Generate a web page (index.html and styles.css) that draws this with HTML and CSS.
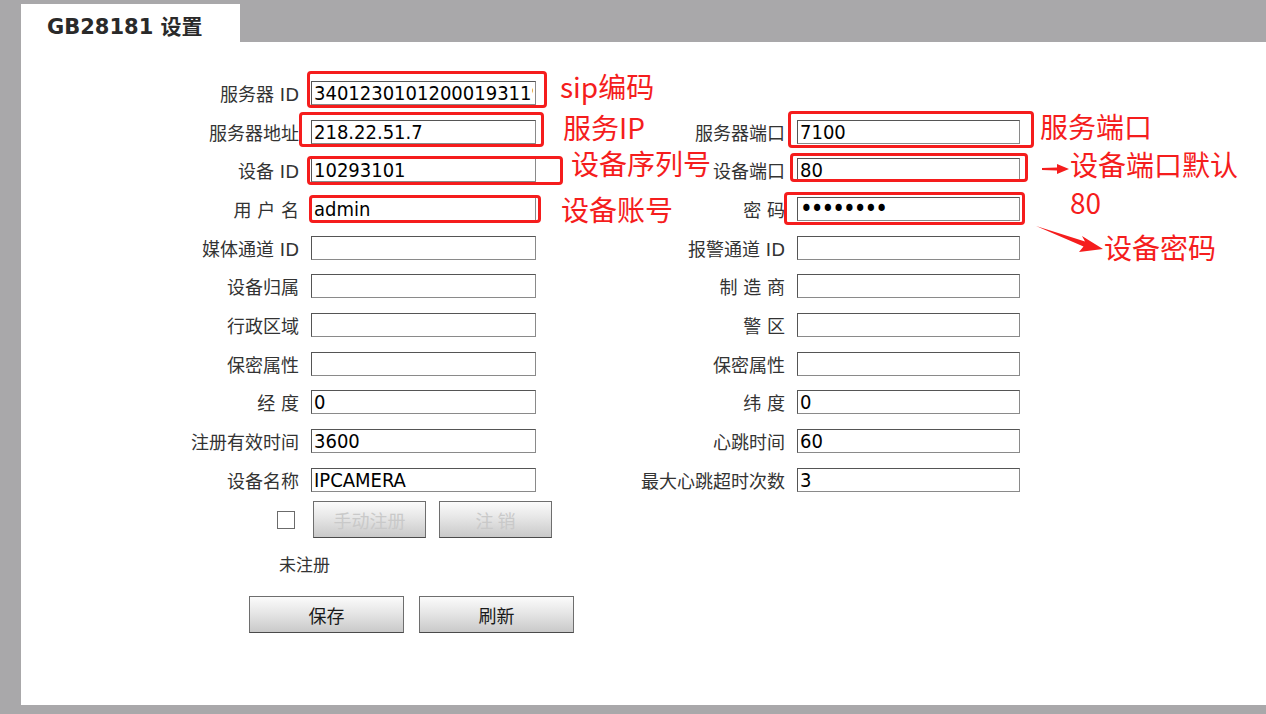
FILE: index.html
```html
<!DOCTYPE html>
<html lang="zh-CN">
<head>
    <meta charset="UTF-8">
    <title>GB28181 设置</title>
    <link rel="stylesheet" href="styles.css">
</head>
<body>
    <div class="tabs">
        <div class="tab">GB28181 设置</div>
    </div>

    <div class="panel">
        <!-- GB28181 form -->
        <div class="form-grid">
            <label class="field-label">服务器 ID</label>
            <input class="field-input" type="text" value="34012301012000193119">
            <span></span><span></span>

            <label class="field-label">服务器地址</label>
            <input class="field-input" type="text" value="218.22.51.7">
            <label class="field-label">服务器端口</label>
            <input class="field-input" type="text" value="7100">

            <label class="field-label">设备 ID</label>
            <input class="field-input" type="text" value="10293101">
            <label class="field-label">设备端口</label>
            <input class="field-input" type="text" value="80">

            <label class="field-label">用 户 名</label>
            <input class="field-input" type="text" value="admin">
            <label class="field-label">密 码</label>
            <input class="field-input" type="password" value="12345678">

            <label class="field-label">媒体通道 ID</label>
            <input class="field-input" type="text" value="">
            <label class="field-label">报警通道 ID</label>
            <input class="field-input" type="text" value="">

            <label class="field-label">设备归属</label>
            <input class="field-input" type="text" value="">
            <label class="field-label">制 造 商</label>
            <input class="field-input" type="text" value="">

            <label class="field-label">行政区域</label>
            <input class="field-input" type="text" value="">
            <label class="field-label">警 区</label>
            <input class="field-input" type="text" value="">

            <label class="field-label">保密属性</label>
            <input class="field-input" type="text" value="">
            <label class="field-label">保密属性</label>
            <input class="field-input" type="text" value="">

            <label class="field-label">经 度</label>
            <input class="field-input" type="text" value="0">
            <label class="field-label">纬 度</label>
            <input class="field-input" type="text" value="0">

            <label class="field-label">注册有效时间</label>
            <input class="field-input" type="text" value="3600">
            <label class="field-label">心跳时间</label>
            <input class="field-input" type="text" value="60">

            <label class="field-label">设备名称</label>
            <input class="field-input" type="text" value="IPCAMERA">
            <label class="field-label">最大心跳超时次数</label>
            <input class="field-input" type="text" value="3">
        </div>

        <!-- register controls -->
        <div class="register-row">
            <span class="check-box"></span>
            <button class="btn btn-small" disabled>手动注册</button>
            <button class="btn btn-small" disabled>注 销</button>
        </div>
        <div class="register-status">未注册</div>

        <div class="save-row">
            <button class="btn btn-wide">保存</button>
            <button class="btn btn-wide">刷新</button>
        </div>
    </div>

    <!-- red annotations drawn over the screenshot -->
    <div class="notes">
        <div class="note-box box-sip"></div>
        <div class="note-box box-ip"></div>
        <div class="note-box box-devid"></div>
        <div class="note-box box-user"></div>
        <div class="note-box box-port"></div>
        <div class="note-box box-devport"></div>
        <div class="note-box box-pwd"></div>

        <span class="note-text text-sip">sip编码</span>
        <span class="note-text text-ip">服务IP</span>
        <span class="note-text text-devid">设备序列号</span>
        <span class="note-text text-user">设备账号</span>
        <span class="note-text text-port">服务端口</span>
        <span class="note-text text-devport">设备端口默认<br>80</span>
        <span class="note-text text-pwd">设备密码</span>

        <svg class="arrow arrow-port" width="28" height="12" viewBox="0 0 28 12">
            <path d="M0 5 L15 4.5 L15 1 L27 6 L15 11 L15 7.5 L0 7 Z" fill="#f51d1d"/>
        </svg>
        <svg class="arrow arrow-pwd" width="70" height="30" viewBox="0 0 70 30">
            <path d="M1 1 L50 16.5 L47 11 L68 24 L44 27 L48.5 21.5 Z" fill="#f51d1d"/>
        </svg>
    </div>
</body>
</html>
```

FILE: styles.css
```css
body {
    margin: 0;
    padding: 0;
    background-color: #a9a8aa;
    font-family: "DejaVu Sans", "Noto Sans CJK SC", sans-serif;
    height: 714px;
    overflow: hidden;
    position: relative;
}

.tabs {
    padding: 4px 0 0 21px;
    height: 38px;
}

.tab {
    width: 219px;
    height: 38px;
    background-color: #ffffff;
    box-sizing: border-box;
    padding: 6px 0 0 26px;
    font-size: 21px;
    font-weight: bold;
    color: #2a2a2a;
}

.panel {
    margin-left: 21px;
    height: 663px;
    box-sizing: border-box;
    padding-top: 31.6px;
    background-color: #ffffff;
}

/* form */
.form-grid {
    display: grid;
    grid-template-columns: 290px 225px 261px 223px;
    grid-auto-rows: 38.7px;
    align-items: center;
}

.field-label {
    text-align: right;
    padding-right: 12px;
    font-size: 18px;
    color: #333333;
    white-space: nowrap;
    font-family: "DejaVu Sans", "Noto Sans CJK SC", sans-serif;
}

.field-input {
    height: 24px;
    box-sizing: border-box;
    margin: 0;
    padding: 0 2px;
    border: 1px solid #8a8a8a;
    border-top-color: #555555;
    border-left-color: #555555;
    background-color: #ffffff;
    font-family: "DejaVu Sans Condensed", "DejaVu Sans", sans-serif;
    font-stretch: condensed;
    font-size: 20px;
    color: #000000;
    outline: none;
}

input[type="password"] {
    font-size: 24px;
    letter-spacing: -2px;
}

/* register controls */
.register-row {
    display: flex;
    align-items: center;
    gap: 13px;
    height: 39px;
    margin: 1px 0 0 256px;
}

.check-box {
    width: 18px;
    height: 18px;
    box-sizing: border-box;
    border: 1px solid #6b6b6b;
    background-color: #ffffff;
    margin-right: 5px;
}

.btn {
    height: 37px;
    box-sizing: border-box;
    border: 1px solid #6e6e6e;
    border-bottom-color: #4a4a4a;
    background: linear-gradient(#fbfbfb, #e6e6e6 45%, #c9c9c9);
    font-family: "Noto Sans CJK SC", sans-serif;
    font-size: 18px;
    color: #1a1a1a;
    padding: 0;
    cursor: pointer;
}

.btn-small {
    width: 113px;
}

.btn-small:disabled {
    color: #c9c9c9;
    cursor: default;
}

.btn-wide {
    width: 155px;
}

.register-status {
    margin: 15px 0 0 258px;
    height: 20px;
    line-height: 20px;
    font-family: "Noto Sans CJK SC", sans-serif;
    font-size: 17px;
    color: #333333;
}

.save-row {
    display: flex;
    gap: 15px;
    margin: 22px 0 0 228px;
}

/* annotations */
.notes {
    position: absolute;
    left: 0;
    top: 0;
    width: 1266px;
    height: 714px;
    pointer-events: none;
}

.note-box {
    position: absolute;
    border: 3px solid #f51d1d;
    border-radius: 4px;
    box-sizing: border-box;
}

.box-sip { left: 307px; top: 71px; width: 240px; height: 37px; }
.box-ip { left: 299px; top: 112px; width: 245px; height: 35px; }
.box-devid { left: 307px; top: 156px; width: 256px; height: 29px; }
.box-user { left: 309px; top: 195px; width: 232px; height: 28px; }
.box-port { left: 788px; top: 111px; width: 246px; height: 37px; }
.box-devport { left: 790px; top: 153px; width: 238px; height: 29px; }
.box-pwd { left: 784px; top: 192px; width: 241px; height: 33px; }

.note-text {
    position: absolute;
    font-family: "Noto Sans CJK SC", sans-serif;
    font-size: 28px;
    line-height: 30px;
    color: #f51d1d;
    white-space: nowrap;
}

.text-sip { left: 560px; top: 71px; }
.text-ip { left: 563px; top: 112px; }
.text-devid { left: 571px; top: 148px; }
.text-user { left: 561px; top: 194px; }
.text-port { left: 1040px; top: 111px; }
.text-devport { left: 1070px; top: 145px; line-height: 38px; }
.text-pwd { left: 1104px; top: 232px; }

.arrow {
    position: absolute;
}

.arrow-port { left: 1042px; top: 163px; }
.arrow-pwd { left: 1035px; top: 225px; }
```
